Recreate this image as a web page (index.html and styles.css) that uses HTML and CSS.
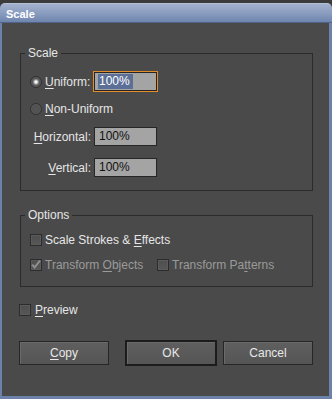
FILE: index.html
```html
<!DOCTYPE html>
<html lang="en">
<head>
  <meta charset="UTF-8" />
  <title>Scale</title>
  <link rel="stylesheet" href="styles.css">
</head>
<body>
  <div class="window">
    <div class="titlebar">Scale</div>
    <div class="content">

      <fieldset class="group scale-group">
        <legend>Scale</legend>
        <div class="row">
          <span class="label-col"><span class="radio checked"></span><span><u>U</u>niform:</span></span>
          <span class="field focused"><span class="sel">100%</span></span>
        </div>
        <div class="row row-nonuniform">
          <span class="radio"></span><span class="radio-text"><u>N</u>on-Uniform</span>
        </div>
        <div class="row row-horizontal">
          <span class="label-col right"><span><u>H</u>orizontal:</span></span>
          <span class="field">100%</span>
        </div>
        <div class="row row-vertical">
          <span class="label-col right"><span><u>V</u>ertical:</span></span>
          <span class="field">100%</span>
        </div>
      </fieldset>

      <fieldset class="group options-group">
        <legend>Options</legend>
        <div class="check-row">
          <span class="check"></span><span>Scale Strokes &amp; <u>E</u>ffects</span>
        </div>
        <div class="check-row disabled">
          <span class="opt">
            <span class="check">
              <svg width="12" height="12" viewBox="0 0 12 12"><path d="M2.2 5.6 L4.6 8.4 L10 1.6" fill="none" stroke="#8e8e8e" stroke-width="2"/></svg>
            </span><span>Transform <u>O</u>bjects</span>
          </span>
          <span class="opt">
            <span class="check"></span><span>Transform Pa<u>t</u>terns</span>
          </span>
        </div>
      </fieldset>

      <div class="check-row preview">
        <span class="check"></span><span><u>P</u>review</span>
      </div>

      <div class="buttons">
        <button class="btn"><u>C</u>opy</button>
        <button class="btn btn-ok">OK</button>
        <button class="btn">Cancel</button>
      </div>

    </div>
  </div>
</body>
</html>
```

FILE: styles.css
```css
body {
  margin: 0;
  background: #3b3b3b;
  font-family: "Liberation Sans", Arial, sans-serif;
  font-size: 12px;
  color: #e6e6e6;
}
u {
  text-underline-offset: 2px;
}
.window {
  margin-top: 3px;
  border-radius: 5px 5px 0 0;
  overflow: hidden;
}
.titlebar {
  height: 20px;
  box-sizing: border-box;
  padding: 2px 0 0 6px;
  line-height: 18px;
  font-size: 11px;
  font-weight: bold;
  color: #fff;
  background: linear-gradient(#c2cde0 0, #a2b1cd 1px, #8a9dc0 10px, #6f85ad 19px, #50648b 19px);
}
.content {
  height: 376px;
  box-sizing: border-box;
  background: #4a4a4a;
  border-style: solid;
  border-color: #6c82aa;
  border-width: 0 3px 3px 2px;
  padding: 23px 16px 0 17px;
}
.group {
  margin: 0 0 0 1px;
  padding: 11px 9px 12px;
  border: 1px solid #2b2b2b;
  min-width: 0;
}
.group legend {
  margin-left: -5px;
  padding: 0 3px;
  line-height: 14px;
}
.row {
  display: flex;
  align-items: center;
  height: 21px;
}
.row-nonuniform {
  margin-top: 6px;
}
.row-horizontal {
  margin-top: 7px;
}
.row-vertical {
  margin-top: 10px;
}
.label-col {
  width: 64px;
  display: flex;
  align-items: center;
  gap: 3px;
}
.label-col.right {
  justify-content: flex-end;
  padding-right: 3px;
  box-sizing: border-box;
}
.radio {
  width: 12px;
  height: 12px;
  box-sizing: border-box;
  border-radius: 50%;
  border: 1px solid #303030;
  background: radial-gradient(circle, #565656 0, #4c4c4c 100%);
  box-shadow: inset 0 0 0 1px #5d5d5d;
}
.radio.checked {
  background: radial-gradient(circle, #f4f4f4 0, #f4f4f4 1.2px, #9a9a9a 2.2px, #5a5a5a 3.4px, #4c4c4c 100%);
}
.radio-text {
  margin-left: 3px;
}
.field {
  width: 63px;
  height: 19px;
  box-sizing: border-box;
  border: 1px solid #262626;
  background: #a4a4a4;
  color: #111;
  padding-left: 4px;
  line-height: 17px;
}
.field.focused {
  outline: 1px solid #e38d2b;
  padding-left: 3px;
}
.sel {
  display: inline-block;
  background: #5c6f97;
  color: #fff;
  padding: 0 3px 0 1px;
  line-height: 15px;
  vertical-align: top;
  margin-top: 1px;
}
.options-group {
  margin-top: 17px;
  padding: 8px 9px 11px;
}
.check-row {
  display: flex;
  align-items: center;
  height: 20px;
}
.check-row + .check-row {
  margin-top: 5px;
}
.check {
  width: 12px;
  height: 12px;
  box-sizing: border-box;
  border: 1px solid #2c2c2c;
  background: linear-gradient(#4e4e4e, #575757);
  box-shadow: inset 0 0 0 1px #5b5b5b;
  margin-right: 3px;
  display: flex;
}
.check svg {
  margin: -1px;
  flex: none;
}
.disabled {
  color: #9a9a9a;
}
.opt {
  display: flex;
  align-items: center;
}
.opt:first-child {
  width: 127px;
}
.preview {
  margin-top: 13px;
}
.preview .check {
  margin-right: 4px;
}
.buttons {
  display: flex;
  align-items: center;
  margin-top: 20px;
}
.btn {
  width: 90px;
  height: 24px;
  box-sizing: border-box;
  padding: 0;
  border: 1px solid #262626;
  background: linear-gradient(#5f5f5f, #555);
  box-shadow: inset 1px 1px 0 #6a6a6a;
  color: #e8e8e8;
  font: inherit;
}
.btn-ok {
  width: 92px;
  height: 26px;
  border: 2px solid #1c1c1c;
  margin: 0 6px 0 16px;
}
```
